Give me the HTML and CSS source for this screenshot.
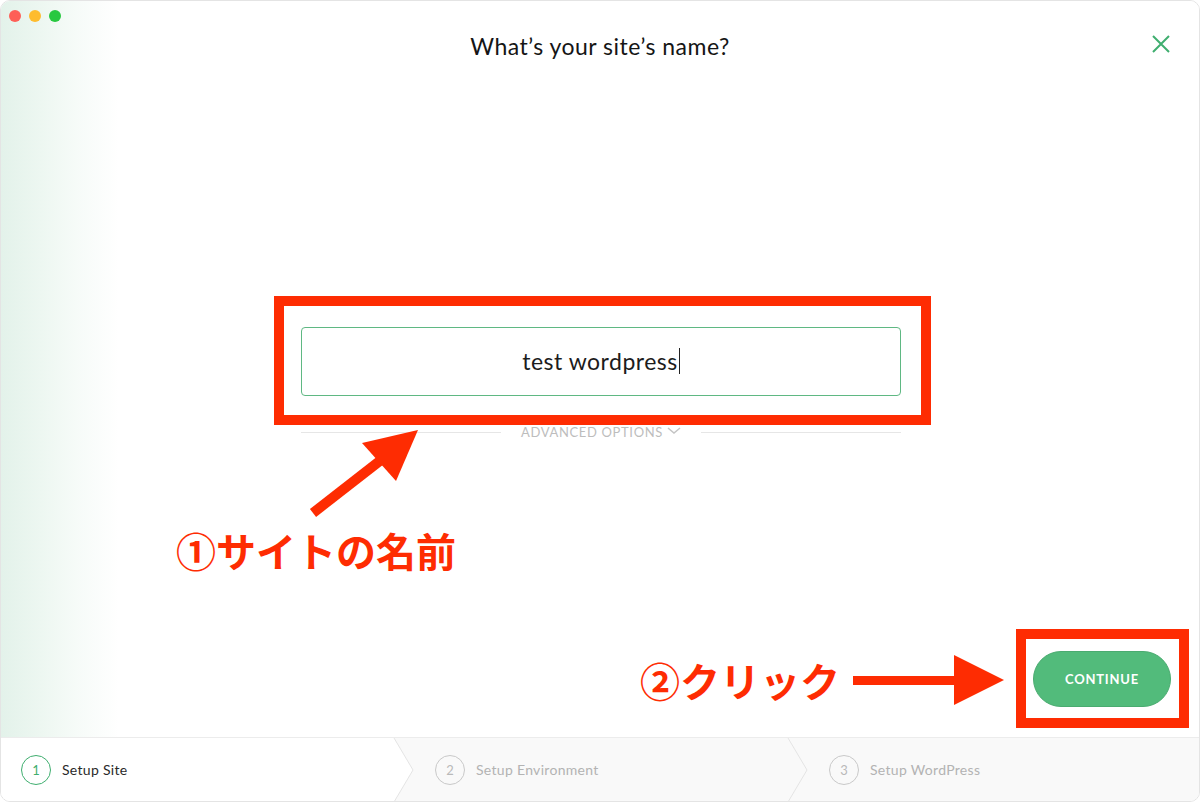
FILE: index.html
```html
<!DOCTYPE html>
<html lang="ja">
<head>
    <meta charset="UTF-8">
    <meta name="viewport" content="width=device-width, initial-scale=1.0">
    <title>Local - Setup Site</title>
    <link rel="stylesheet" href="styles.css">
</head>
<body>
    <div class="window">
        <div class="traffic">
            <span class="dot red"></span>
            <span class="dot yellow"></span>
            <span class="dot green"></span>
        </div>

        <div class="main">
            <header class="header">
                <h1>What’s your site’s name?</h1>
                <button class="close" aria-label="Close">
                    <svg width="20" height="20" viewBox="0 0 20 20">
                        <path d="M2 2 L18 18 M18 2 L2 18" stroke="#3fae6f" stroke-width="2" fill="none"/>
                    </svg>
                </button>
            </header>

            <form class="site-form">
                <div class="name-field">test wordpress<span class="caret"></span></div>
                <div class="advanced">
                    <span class="rule"></span>
                    <span class="advanced-label">ADVANCED OPTIONS
                        <svg width="14" height="8" viewBox="0 0 14 8"><path d="M1 1 L7 6 L13 1" stroke="#c4c4c4" stroke-width="1.5" fill="none"/></svg>
                    </span>
                    <span class="rule"></span>
                </div>
            </form>

            <div class="actions">
                <button type="button" class="continue">CONTINUE</button>
            </div>
        </div>

        <nav class="steps">
            <div class="step active">
                <span class="num">1</span>
                <span class="label">Setup Site</span>
                <svg class="chev" width="22" height="64" viewBox="0 0 22 64"><path d="M1 0 L20 32 L1 64"/></svg>
            </div>
            <div class="step">
                <span class="num">2</span>
                <span class="label">Setup Environment</span>
                <svg class="chev" width="22" height="64" viewBox="0 0 22 64"><path d="M1 0 L20 32 L1 64"/></svg>
            </div>
            <div class="step">
                <span class="num">3</span>
                <span class="label">Setup WordPress</span>
            </div>
        </nav>

        <!-- annotations drawn over the screenshot -->
        <svg class="marks" width="1200" height="802" viewBox="0 0 1200 802">
            <rect x="279" y="301" width="647" height="119" fill="none" stroke="#fe2c02" stroke-width="10"/>
            <rect x="1021" y="634" width="163" height="89" fill="none" stroke="#fe2c02" stroke-width="10"/>
            <line x1="313" y1="513" x2="381" y2="460" stroke="#fe2c02" stroke-width="10"/>
            <polygon points="418,430 362,443 396,481" fill="#fe2c02"/>
            <rect x="853" y="676" width="104" height="9" fill="#fe2c02"/>
            <polygon points="954,655 1004,680 954,705" fill="#fe2c02"/>
        </svg>
        <div class="note note-name">①サイトの名前</div>
        <div class="note note-click">②クリック</div>
    </div>
</body>
</html>
```

FILE: styles.css
```css
* {
    box-sizing: border-box;
}

body {
    margin: 0;
    background-color: #fff;
    font-family: Lato, "Open Sans", sans-serif;
    color: #1c1c1c;
}

.window {
    position: relative;
    width: 1200px;
    height: 802px;
    display: flex;
    flex-direction: column;
    border: 1px solid #e4e4e4;
    border-radius: 10px;
    overflow: hidden;
    background-color: #fff;
}

.traffic {
    position: absolute;
    top: 9px;
    left: 8px;
    display: flex;
    gap: 8px;
}

.dot {
    width: 12px;
    height: 12px;
    border-radius: 50%;
}

.dot.red { background-color: #fe5f57; }
.dot.yellow { background-color: #febc2e; }
.dot.green { background-color: #28c840; }

.main {
    flex: 1;
    display: flex;
    flex-direction: column;
    background: linear-gradient(to right, #e3f2ea 0, #edf7f1 40px, #f6fbf8 75px, #fff 118px);
}

.header {
    height: 90px;
    display: flex;
    align-items: center;
    justify-content: center;
    position: relative;
}

.header h1 {
    margin: 0;
    font-size: 23px;
    font-weight: 400;
    letter-spacing: 0.5px;
    color: #151515;
}

.close {
    position: absolute;
    right: 28px;
    top: 33px;
    padding: 0;
    border: none;
    background: none;
    line-height: 0;
}

.site-form {
    width: 600px;
    margin: 236px auto 0 300px;
}

.name-field {
    height: 69px;
    border: 1.5px solid #5fb883;
    border-radius: 4px;
    display: flex;
    align-items: center;
    justify-content: center;
    font-size: 23px;
    letter-spacing: 0.5px;
    color: #1c1c1c;
    padding-bottom: 2px;
}

.caret {
    display: inline-block;
    width: 1px;
    height: 26px;
    background-color: #222;
    margin-left: 1px;
}

.advanced {
    margin-top: 28px;
    display: flex;
    align-items: center;
    gap: 20px;
}

.rule {
    flex: 1;
    height: 1px;
    background-color: #e6e6e6;
}

.advanced-label {
    font-size: 13px;
    color: #bdbdbd;
    letter-spacing: 0.65px;
    display: flex;
    align-items: center;
    gap: 4px;
}

.advanced-label svg {
    margin-top: -3px;
}

.actions {
    margin-top: auto;
    display: flex;
    justify-content: flex-end;
    padding: 0 28px 30px 0;
}

.continue {
    width: 138px;
    height: 56px;
    border: 1px solid #4aab70;
    border-radius: 28px;
    background-color: #52bb7b;
    color: #fff;
    font-family: Lato, sans-serif;
    font-size: 13px;
    font-weight: 700;
    letter-spacing: 0.8px;
}

.steps {
    height: 64px;
    display: flex;
    border-top: 1px solid #ececec;
    background-color: #f9f9f9;
}

.step {
    position: relative;
    flex: 0 0 394px;
    display: flex;
    align-items: center;
    gap: 11px;
    padding-left: 40px;
    color: #b3b3b3;
    font-size: 14px;
    letter-spacing: 0.3px;
}

.step.active {
    background-color: #fff;
    padding-left: 20px;
    color: #2a2a2a;
}

.step:last-child {
    flex: 1;
}

.num {
    width: 30px;
    height: 30px;
    border: 1.5px solid #c9c9c9;
    border-radius: 50%;
    display: flex;
    align-items: center;
    justify-content: center;
    font-size: 13px;
    letter-spacing: 0;
    color: #b9b9b9;
}

.step.active .num {
    border-color: #3fae6f;
    color: #3fae6f;
}

.chev {
    position: absolute;
    right: -20px;
    top: 0;
    z-index: 1;
}

.chev path {
    fill: none;
    stroke: #e4e4e4;
    stroke-width: 1;
}

.step.active .chev path {
    fill: #fff;
}

.marks {
    position: absolute;
    top: -1px;
    left: -1px;
    pointer-events: none;
}

.note {
    position: absolute;
    font-family: "Noto Sans CJK JP", sans-serif;
    font-size: 40px;
    font-weight: 700;
    line-height: 40px;
    color: #fe2c02;
}

.note-name {
    left: 175px;
    top: 529px;
}

.note-click {
    left: 639px;
    top: 659px;
}
```
